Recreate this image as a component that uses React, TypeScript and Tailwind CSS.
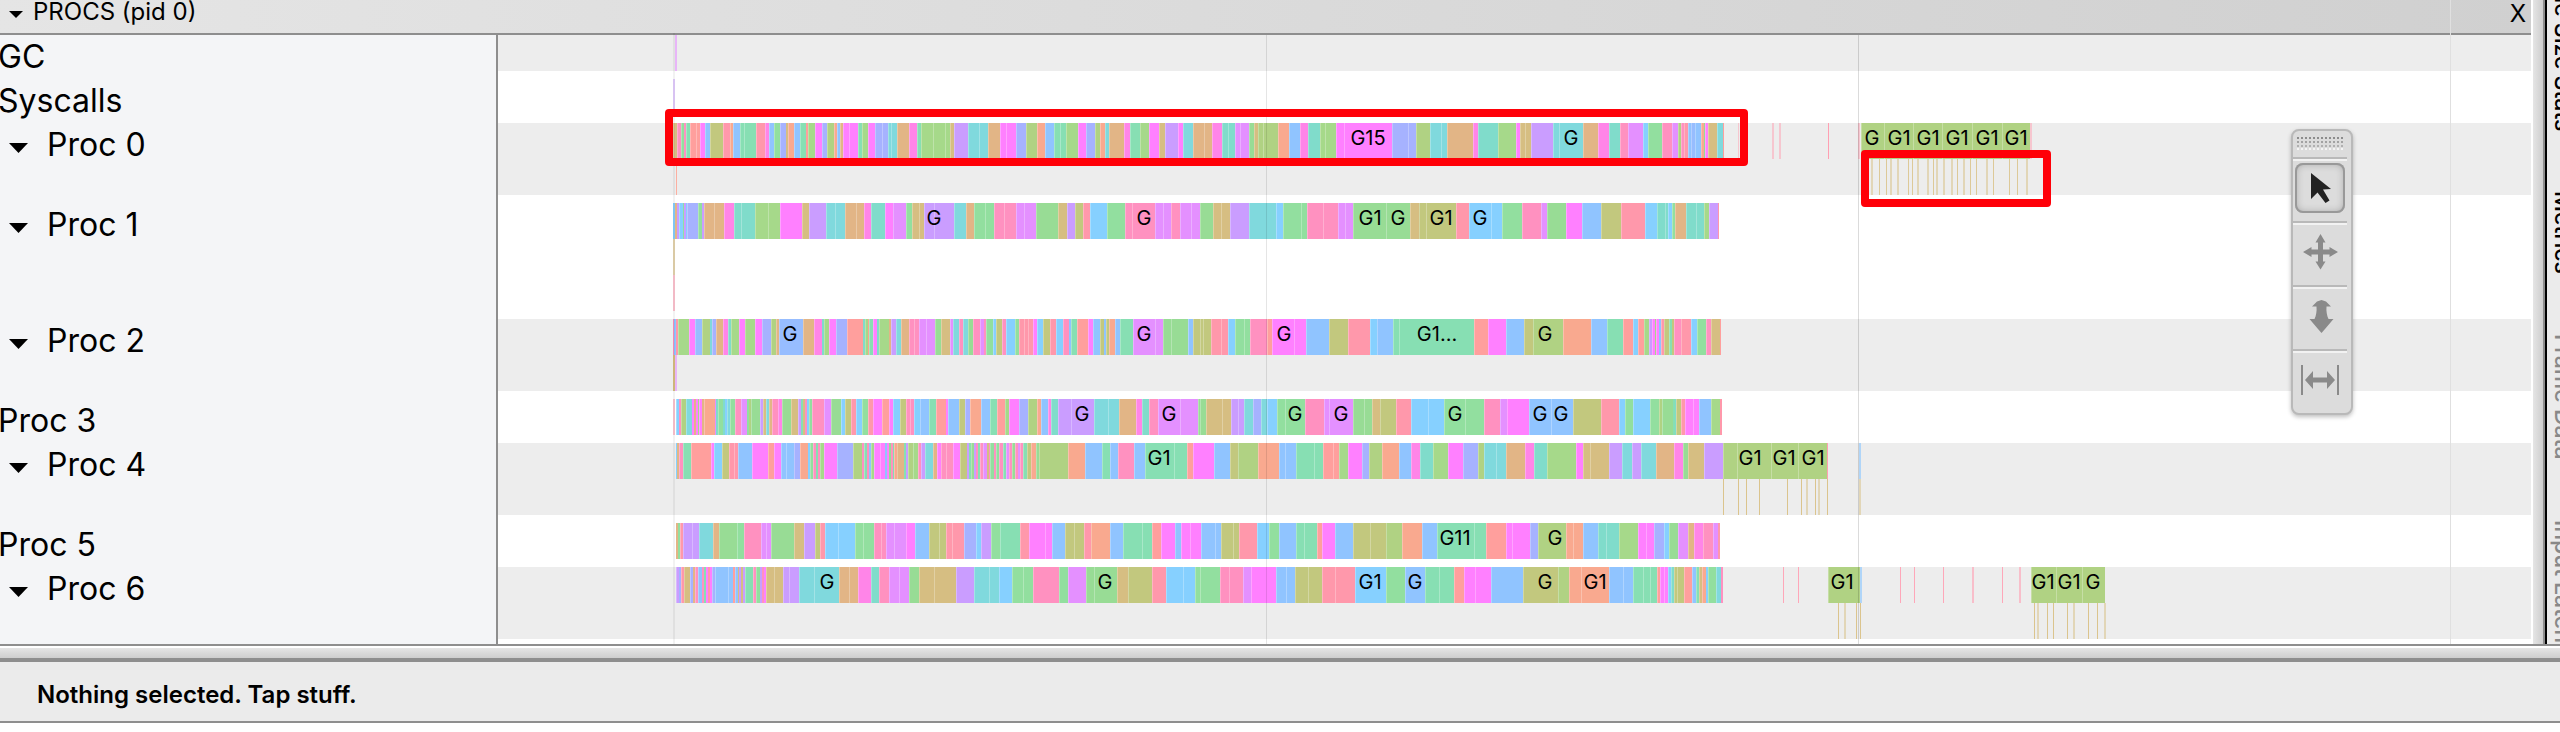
import React from "react";

const COLORS: Record<string, string> = {
  r: "#ff9f9d", R: "#ff98ab", o: "#f9a98f", t: "#e2b586", k: "#d6be82", y: "#c2c87e",
  l: "#b0d283", g: "#a6d98a", G: "#98dc95", e: "#92df9f", m: "#87dfb3", a: "#80dccb",
  c: "#80d9dd", s: "#86d0ff", b: "#90c4ff", B: "#97bdff", i: "#a6b2ff", v: "#ca9dff",
  u: "#e490ff", f: "#ff80ff", h: "#ff85e8", P: "#ff91c0",
};

const ORIGIN = 498;
const TICKS_PER_PX = 2.8;
const PINK = "#ff9fb2";
const TAN = "#d8bf82";
const SKY = "#a9d2f8";

type Label = [number, string];
type Mark = { x: number; w: number; color: string; lane: number; alpha?: number };
type Chunk = { base: number; from: number; data: string };
type Track = {
  name: string;
  open?: boolean;
  shaded?: boolean;
  lanes: number;
  chunks: Chunk[];
  blocks?: number[][];
  marks: Mark[];
  labels: Label[];
};

const marks = (lane: number, color: string, xs: number[], alpha = 0.8): Mark[] =>
  xs.map((x) => ({ x, w: 1, color, lane, alpha }));
const wide = (lane: number, color: string, xs: number[], alpha = 0.5): Mark[] =>
  xs.map((x) => ({ x, w: 2, color, lane, alpha }));

const TRACKS: Track[] = [
  { name: "GC", shaded: true, lanes: 1, chunks: [], labels: [], marks: wide(0, "#e490ff", [675], 0.6) },
  { name: "Syscalls", lanes: 1, chunks: [], labels: [], marks: wide(0, "#ca9dff", [673], 0.5) },
  {
    name: "Proc 0", open: true, shaded: true, lanes: 2,
    chunks: [
      { base: 660, from: 36, data: "k47 P60 e66 P72 m84 r100 r113 f125 b139 y175 R196 o203 b225 m234 m269 R294 h306 b319 e336 i353 k358 o376 b392 m408 r415 g433 f453 i468 l486 o495 b503 t512 f529 f555 m565 g582 f603 i621 i637 c647 c663 t697 h720 m731 g765 g799 g812 k824 v862 c892 c917 t951 f970 f997 i1026 l1056 o1078 b1103 m1120 m1138 g1170 f1194 i1217 l1232 o1245 c1256 t1299 h1317 m1343 g1370 f1397 k1415 v1451 f1465 c1494 t1524 t1545 f1568" },
      { base: 1200, from: -20, data: "t12 t33 h62 a79 a98 u113 u136 G151 k163 l177 l217 o250 b281 h301 a335 g350 g380 f404 f538 i583 i606 l645 c676 c691 t763 h779 a833 g884 f897 k911 k927 v987 c1006 c1072 t1114 h1144 a1175 P1197 u1239 s1255 e1294 P1322 u1337 l1346 P1356 R1367 b1375 B1385 b1403 o1410 G1415 f1422 k1448 c1463 r1468" },
    ],
    blocks: [[1861, 1884, 1913, 1942, 1972, 2002, 2030]],
    marks: [
      ...marks(1, "#ff9f8d", [676]),
      ...marks(0, PINK, [1738], 0.5),
      ...wide(0, PINK, [1772, 1779, 1858, 2030]),
      ...marks(0, PINK, [1828], 1),
      ...marks(1, TAN, [1879, 1886, 1908, 1912, 1933, 1957, 1970, 1976, 1993, 2009, 2017]),
      ...wide(1, TAN, [1871, 1890, 1897, 1917, 1927, 1936, 1943, 1951, 1963, 1986, 2026]),
    ],
    labels: [[1368, "G15"], [1571, "G"], [1872, "G"], [1899, "G1"], [1928, "G1"], [1957, "G1"], [1987, "G1"], [2016, "G1"]],
  },
  {
    name: "Proc 1", open: true, lanes: 3,
    chunks: [
      { base: 660, from: 36, data: "s43 t47 v53 s64 e67 v72 s76 i107 e118 v123 t152 t180 h207 a228 a267 g301 g336 f398 k417 v464 c491 c519 t548 t571 h592 a631 f652 u690 e705 k724 k738 v766 v824 c858 t880 e911 e935 P964 P998 u1018 u1054 G1113 k1139 v1163 y1183 R1205 s1252 e1303 P1322 P1385 u1409 u1432 P1457 u1488 u1512 G1549 k1568" },
      { base: 1200, from: 0, data: "G37 k60 k83 v138 c214 s233 e283 e299 P343 P385 u407 u428 G522 G587 k614 y634 y717 R754 s814 s846 e902 P956 u971 G1026 f1070 b1124 y1180 R1247 s1280 a1301 a1310 s1322 e1329 t1362 a1388 a1410 g1424 v1450 R1453" },
    ],
    marks: [...wide(1, TAN, [673], 0.65), ...wide(2, PINK, [673], 0.6)],
    labels: [[934, "G"], [1144, "G"], [1370, "G1"], [1398, "G"], [1441, "G1"], [1480, "G"]],
  },
  {
    name: "Proc 2", open: true, shaded: true, lanes: 2,
    chunks: [
      { base: 660, from: 36, data: "P40 b46 R50 g80 f98 B118 l139 c145 i158 t175 h190 a198 g221 f238 g267 f285 i311 l325 t332 B399 t430 h454 a460 g474 f493 i524 r569 a573 g582 o585 m595 f608 a612 g640 t648 v662 c676 t698 P710 P724 u744 u769 G787 k811 u820 c837 P848 c862 G876 P897 u906 P913 e931 s942 y957 P970 s995 e1004 R1018 R1030 R1043 f1055 s1071 y1092 R1109 s1127 P1146 b1152 m1167 r1198 f1212 b1231 y1243 b1249 y1258 o1274 b1287 m1323 u1385 u1409 G1432 G1477 b1493 y1520 y1544 R1568" },
      { base: 1200, from: 0, data: "y9 y32 R58 R77 s99 e124 e141 P187 r202 f264 f298 b362 y413 R477 s495 b540 m558 m768 r807 f858 b907 y931 l1015 o1095 b1140 m1185 r1212 s1226 r1243 g1258 v1265 f1273 g1278 f1284 b1290 R1300 y1312 m1322 y1328 P1348 R1376 s1391 e1418 P1432 k1456 r1459" },
    ],
    marks: [...wide(1, TAN, [673], 1), ...wide(1, "#e490ff", [675], 0.6)],
    labels: [[790, "G"], [1144, "G"], [1284, "G"], [1437, "G1..."], [1545, "G"]],
  },
  {
    name: "Proc 3", lanes: 1,
    chunks: [
      { base: 660, from: 45, data: "s52 P60 l73 c89 f95 t100 f105 g110 f117 t124 o153 u158 a162 e176 a182 s188 c195 e210 P226 u244 e250 l256 G281 v289 k297 c305 t313 P330 h342 G368 k386 v396 m401 k405 P412 s417 e425 P459 u479 G507 s517 y535 R550 s565 e581 R597 f622 r642 f651 s671 y690 P700 P711 s729 b753 m774 r800 f806 b836 y854 i869 o900 b923 m943 r965 g977 f1006 i1030 l1055 o1068 b1085 h1096 a1115 v1150 v1215 c1255 c1286 t1334 h1350 a1370 P1393 u1457 u1507 G1531 k1568" },
      { base: 1200, from: 0, data: "G18 k62 k88 v107 v122 c147 i171 c187 s216 e237 e293 P347 u361 u427 G460 G482 k505 y550 R592 s638 s682 e743 e795 P840 u859 f922 b983 b1045 y1124 R1172 s1190 e1213 s1261 e1284 l1293 G1323 m1329 a1334 y1348 R1359 f1381 f1396 b1432 g1456 R1462" },
    ],
    marks: wide(0, PINK, [673], 0.6),
    labels: [[1082, "G"], [1169, "G"], [1295, "G"], [1341, "G"], [1455, "G"], [1540, "G"], [1561, "G"]],
  },
  {
    name: "Proc 4", open: true, shaded: true, lanes: 2,
    chunks: [
      { base: 660, from: 45, data: "s48 t52 P63 m88 r144 f152 s173 y194 R206 R218 b258 f303 r320 f340 b354 b376 i391 o413 s420 e428 P436 m442 P448 g458 f496 i539 l565 P572 m580 P585 b592 g600 f615 f630 b635 f640 G646 P652 m656 o663 t683 m689 v694 l708 g722 P730 v742 c764 t776 f787 P800 P819 f841 y859 v865 m870 G879 v884 P890 m897 P903 u915 k920 P925 e935 P940 e950 P960 m968 u978 P985 G993 P1003 u1009 P1015 m1028 y1040 o1054 G1061 l1142 o1191 b1238 m1259 b1283 P1326 b1357 m1438 m1475 r1506 f1551 b1568" },
      { base: 1200, from: -20, data: "f40 b84 y106 l162 o220 b237 b269 m319 m344 r371 r390 g413 f454 i473 l510 o558 b592 h616 a653 g694 f735 i777 l795 c828 c858 t910 h934 a972 g1054 f1073 k1093 k1146 v1181 c1210 v1236 c1277 t1328 h1352 G1366 k1410 v1464" },
    ],
    blocks: [[1723, 1737, 1771, 1798, 1827]],
    marks: [
      ...marks(0, PINK, [1827], 1),
      ...wide(0, SKY, [1859], 0.9),
      ...marks(1, TAN, [1723, 1738, 1746, 1759, 1787, 1801, 1815, 1827], 0.9),
      ...wide(1, TAN, [1806, 1818, 1859]),
    ],
    labels: [[1159, "G1"], [1750, "G1"], [1784, "G1"], [1813, "G1"]],
  },
  {
    name: "Proc 5", lanes: 1,
    chunks: [
      { base: 660, from: 45, data: "t50 e55 R64 v90 v108 c148 t166 G216 e236 P283 u297 u312 G374 k403 v434 y448 R462 s499 s545 e569 e600 P618 P634 u654 u690 f715 b753 y782 y800 R818 R852 i884 s899 v928 e953 m1009 R1033 f1079 f1098 b1134 y1159 y1188 R1208 o1260 b1295 m1350 m1377 r1403 f1442 b1459 f1485 f1515 b1568" },
      { base: 1200, from: 0, data: "f3 b43 b60 y93 y110 R160 s193 e222 b269 m292 m327 r342 f378 b427 y477 y522 l565 o621 b664 m766 m802 r858 f874 f925 i946 l1024 o1043 o1072 b1113 a1136 a1174 g1225 f1250 f1272 i1298 s1314 G1338 u1367 t1384 h1409 P1435 u1450 R1456" },
    ],
    marks: [],
    labels: [[1455, "G11"], [1555, "G"]],
  },
  {
    name: "Proc 6", open: true, shaded: true, lanes: 2,
    chunks: [
      { base: 660, from: 45, data: "v54 i60 R66 k84 i92 t98 P105 b118 P124 m130 f135 R140 f145 i153 b190 b203 r210 b217 k222 v227 k232 v238 m260 P270 e280 v286 P292 f298 k320 k345 v361 v390 c432 c500 t528 t555 h592 a614 P642 u668 u698 G726 k768 k830 v880 c920 c948 s985 e1017 e1045 P1116 e1143 u1194 G1216 G1279 k1311 y1377 R1418 s1465 s1499 e1568" },
      { base: 1200, from: 0, data: "e55 P82 P120 u142 f213 b240 b265 y303 y341 R379 R433 s522 e573 b631 m668 m712 r740 f771 f815 b904 y1001 l1034 o1066 o1146 b1183 b1211 m1240 m1260 m1279 r1289 f1300 f1310 s1320 a1328 y1336 y1356 r1377 b1390 m1398 k1406 o1418 s1422 e1445 c1459 P1464" },
    ],
    blocks: [[1828, 1860], [2031, 2056, 2082, 2105]],
    marks: [
      ...marks(0, PINK, [1783, 1798, 1900, 1914, 1943, 2002], 0.9),
      ...wide(0, PINK, [1972, 2019], 0.6),
      ...wide(0, SKY, [1860], 0.9),
      ...marks(1, TAN, [1838, 1856, 1860, 2034, 2047, 2053, 2067, 2088, 2097], 0.9),
      ...wide(1, TAN, [1844, 2037, 2073, 2104]),
    ],
    labels: [[827, "G"], [1105, "G"], [1370, "G1"], [1415, "G"], [1545, "G"], [1595, "G1"], [1842, "G1"], [2043, "G1"], [2069, "G1"], [2093, "G"]],
  },
];

const LANE = 36;

function Lanes({ track }: { track: Track }) {
  const slices: { x: number; end: number; fill: string }[] = [];
  track.chunks.forEach(({ base, from, data }) => {
    let x = Math.round(base + from / TICKS_PER_PX);
    data.split(" ").forEach((item) => {
      const end = Math.round(base + Number(item.slice(1)) / TICKS_PER_PX);
      slices.push({ x, end, fill: COLORS[item[0]] });
      x = end;
    });
  });
  (track.blocks ?? []).forEach((edges) => {
    edges.slice(1).forEach((end, n) => slices.push({ x: edges[n], end, fill: COLORS.l }));
  });
  return (
    <svg className="block w-full" height={track.lanes * LANE} aria-label={`${track.name} slices`}>
      {slices.map((s, n) => (
        <g key={n}>
          <rect x={s.x - ORIGIN} y={0} width={Math.max(1, s.end - s.x)} height={LANE} fill={s.fill} />
          {s.end - s.x > 2 && (
            <rect x={s.x - ORIGIN} y={0} width={1} height={LANE} fill="#ffffff" opacity={0.28} />
          )}
        </g>
      ))}
      {track.marks.map((m, n) => (
        <rect key={n} x={m.x - ORIGIN} y={m.lane * LANE} width={m.w} height={LANE} fill={m.color} opacity={m.alpha} />
      ))}
      {track.labels.map(([x, text]) => (
        <text key={x} x={x - ORIGIN} y={22} textAnchor="middle" fontSize={20} fill="#000">
          {text}
        </text>
      ))}
    </svg>
  );
}

function Caret({ className }: { className: string }) {
  return (
    <svg viewBox="0 0 20 10" className={`shrink-0 ${className}`} preserveAspectRatio="none" aria-hidden="true">
      <path d="M0 0H20L10 10Z" fill="#000" />
    </svg>
  );
}

function TrackRow({ track }: { track: Track }) {
  const pad = track.shaded ? "" : "py-2";
  return (
    <div className="flex">
      <div className={`w-[496px] shrink-0 bg-[#f4f5f7] ${pad}`}>
        {track.open ? (
          <button className="flex h-9 items-start pl-[9px] text-[32px] leading-[44px]">
            <Caret className="mt-5 mr-[19px] h-[10px] w-[19px]" />
            {track.name}
          </button>
        ) : (
          <div className="-ml-0.5 h-9 text-[32px] leading-[44px]">{track.name}</div>
        )}
      </div>
      <div className={`min-w-0 flex-1 border-l-2 border-[#8e8e8e] ${track.shaded ? "bg-[#ededed]" : "bg-white"} ${pad}`}>
        <Lanes track={track} />
      </div>
    </div>
  );
}

const TOOLS = [
  {
    name: "Selection",
    active: true,
    art: <path d="M16 10V36L22.500 29.500L30.500 40L34.500 37.500L28 26.500L36 26Z" fill="#222" />,
  },
  {
    name: "Pan",
    art: (
      <path d="M25.500 7L30.500 15.500H28V22.500H34.500V20L43 25L34.500 30V27.500H28V34.500H30.500L25.500 42.500L20.500 34.500H23V27.500H16.500V30L8 25L16.500 20V22.500H23V15.500H20.500Z" fill="#8a8a8a" />
    ),
  },
  {
    name: "Zoom",
    art: <path d="M26.500 9L31 10.500L36 15.500H31.500C31 20 32 25 33.500 28H38.500L30 38L26.500 42L23 38L14.500 28H19.500C21 25 22 20 21.500 15.500H17L22 10.500Z" fill="#8a8a8a" />,
  },
  {
    name: "Timing",
    art: (
      <g fill="#8a8a8a">
        <rect x="6" y="10" width="2" height="30" />
        <rect x="42" y="10" width="2" height="30" />
        <path d="M10 25L18 16V22.500H32V16L40 25L32 34V27.500H18V34Z" />
      </g>
    ),
  },
];

function Toolbox() {
  return (
    <div className="absolute top-[129px] right-[207px] w-[62px] rounded-lg border-2 border-[#b9b9b9] bg-[#dcdcdc] shadow-[0_2px_4px_rgba(0,0,0,0.25)]">
      <svg className="block h-[26px] w-full" aria-hidden="true">
        {[6, 10, 14].map((y, n) => (
          <line key={y} x1="4" x2="51" y1={y + 1} y2={y + 1} stroke={["#8c8c8c", "#a2a2a2", "#b0b0b0"][n]} strokeWidth="2" strokeDasharray="2 2" />
        ))}
        <line x1="4" x2="51" y1="18" y2="18" stroke="#f4f4f4" strokeWidth="2" strokeDasharray="2 2" />
      </svg>
      {TOOLS.map((tool) => (
        <div key={tool.name} className="h-16">
          <div className="h-1 w-[54px] border-t-2 border-b-2 border-t-[#b9b9b9] border-b-[#f2f2f2]" />
          <button
            aria-label={tool.name}
            className={`mt-0.5 ml-0.5 block size-[50px] rounded-lg ${
              tool.active ? "shadow-[inset_0_0_0_2px_#999,inset_0_0_8px_rgba(0,0,0,0.3)]" : ""
            }`}
          >
            <svg viewBox="0 0 50 50" className="size-full">{tool.art}</svg>
          </button>
        </div>
      ))}
    </div>
  );
}

const TABS = [
  { name: "File Size Stats", tone: "text-black" },
  { name: "Metrics", tone: "text-black" },
  { name: "Frame Data", tone: "text-[#888]" },
  { name: "Input Latency", tone: "text-[#888]" },
];

export default function App() {
  return (
    <div className="flex min-h-screen flex-col bg-white font-['Inter','Liberation_Sans',sans-serif] text-black">
      <div className="relative flex overflow-hidden border-b-2 border-[#8e8e8e]">
        <main className="relative mr-0.5 min-w-0 flex-1 overflow-hidden pb-[5px]">
          <header className="flex h-[35px] items-start justify-between border-b-2 border-[#8e8e8e] bg-linear-to-r from-[#e5e5e5] to-[#d0d0d0] pr-[5px] pl-[9px] text-2xl">
            <button className="flex items-start leading-6 whitespace-nowrap">
              <Caret className="mt-[11px] mr-[10px] h-[7px] w-[14px]" />
              PROCS (pid 0)
            </button>
            <button className="leading-7" aria-label="Close">X</button>
          </header>
          {TRACKS.map((track) => (
            <TrackRow key={track.name} track={track} />
          ))}
          <div className="absolute bottom-0 left-0 h-[5px] w-[498px] border-r-2 border-[#8e8e8e] bg-[#f4f5f7]" />
          <svg className="pointer-events-none absolute inset-0 size-full" aria-hidden="true">
            <rect x="673" y="33" width="2" height="100%" fill="#000" opacity="0.05" />
            <rect x="1266" y="35" width="1" height="100%" fill="#000" opacity="0.1" />
            <rect x="1858" y="35" width="1" height="100%" fill="#000" opacity="0.14" />
            <rect x="2450" y="0" width="1" height="100%" fill="#e0e0e0" />
          </svg>
          <div className="absolute top-[109px] left-[665px] h-[57px] w-[1083px] rounded-sm border-8 border-[#ff0008]" />
          <div className="absolute top-[150px] left-[1861px] h-[57px] w-[190px] rounded-sm border-8 border-[#ff0008]" />
        </main>
        <div className="w-3 shrink-0 border-r-2 border-[#8e8e8e] bg-linear-to-r from-[#e5e5e5] to-[#cecece]" />
        <aside className="relative w-[15px] shrink-0 overflow-hidden border-l-2 border-black bg-[#ebebeb]">
          <nav className="absolute -top-[22px] left-[3px] flex flex-col gap-[60px] text-[23px] leading-[26px] font-medium">
            {TABS.map((tab) => (
              <a key={tab.name} href="#" className={`whitespace-nowrap [writing-mode:vertical-rl] ${tab.tone}`}>
                {tab.name}
              </a>
            ))}
          </nav>
        </aside>
        <Toolbox />
      </div>
      <div className="mt-0.5 h-[14px] border-b-4 border-[#8e8e8e] bg-linear-to-b from-[#e5e5e5] to-[#cecece]" />
      <footer className="border-b-2 border-[#8e8e8e] bg-[#ebebeb] pt-[19px] pb-3 pl-[37px] text-2xl leading-7 font-semibold">
        Nothing selected. Tap stuff.
      </footer>
    </div>
  );
}
